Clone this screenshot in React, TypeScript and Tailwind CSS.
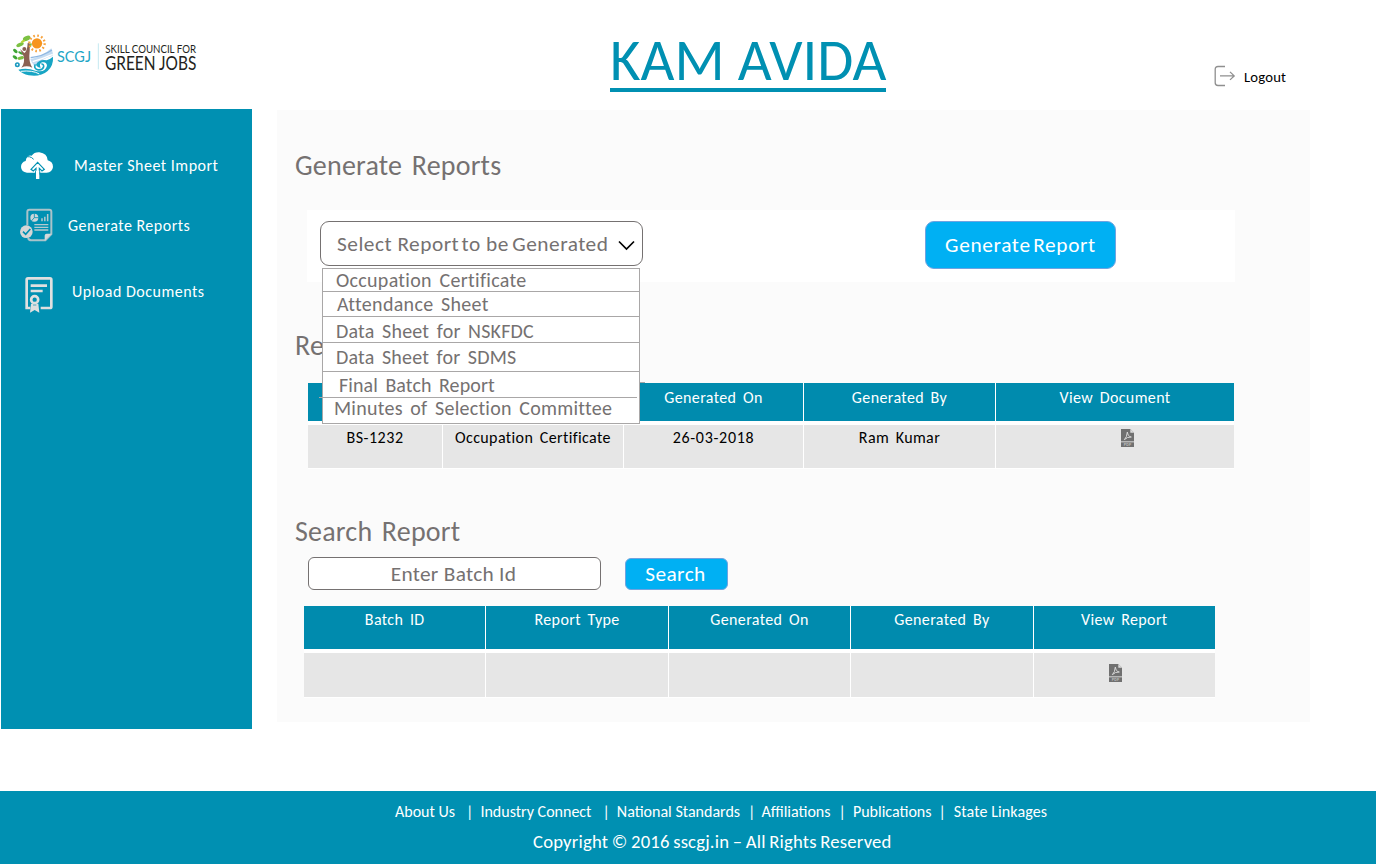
import type { ReactNode } from "react";

function Logo() {
  return (
    <svg width="190" height="48" viewBox="30 18 570 144" className="shrink-0 overflow-visible">
      {/* leaves */}
      <g fill="#7cc142">
        <ellipse cx="80" cy="40" rx="12" ry="7" transform="rotate(-25 80 40)" />
        <ellipse cx="60" cy="59" rx="12" ry="5.500" transform="rotate(-25 60 59)" />
        <ellipse cx="62" cy="99" rx="10" ry="5" transform="rotate(-15 62 99)" />
        <ellipse cx="90" cy="62" rx="8" ry="4" transform="rotate(-60 90 62)" />
      </g>
      <g fill="#3fa535">
        <ellipse cx="46" cy="78" rx="8" ry="4.500" transform="rotate(40 46 78)" />
        <ellipse cx="62" cy="84" rx="8" ry="3.500" transform="rotate(25 62 84)" />
        <ellipse cx="45" cy="97" rx="8" ry="4.500" transform="rotate(35 45 97)" />
      </g>
      <ellipse cx="69" cy="49" rx="7" ry="3.500" fill="#b5d334" transform="rotate(-30 69 49)" />
      {/* tree */}
      <path d="M64 128 Q76 114 71 94 L60 72 L73 84 Q82 78 83 54 L89 55 Q90 76 88 92 Q87 112 97 128 Q80 120 64 128 Z" fill="#8b6152" />
      <circle cx="73" cy="72" r="6" fill="#8b6152" />
      {/* sun */}
      <circle cx="111" cy="55" r="23" fill="none" stroke="#f7a23c" strokeWidth="7" strokeDasharray="5 7.040" />
      <circle cx="111" cy="55" r="15.500" fill="#f7941d" />
      {/* water */}
      <path d="M91 102 Q122 98 154 70 Q160 84 158 93 Q130 98 103 124 Q94 112 91 102Z" fill="#c5dcf2" />
      <path d="M92 98 Q128 94 156 75" stroke="#8fb8e2" strokeWidth="4" fill="none" />
      <path d="M98 110 Q128 101 158 88" stroke="#fff" strokeWidth="4" fill="none" />
      <path d="M159 95 Q161 121 143 138 Q121 157 86 151 Q67 147 55 134 Q82 128 106 137 Q135 145 141 122 Q140 109 126 112 Q116 117 122 128 Q111 127 108 119 Q117 102 140 106 Q150 103 159 95Z" fill="#17a5c4" />
      <path d="M62 139 Q98 135 118 147" stroke="#fff" strokeWidth="3" fill="none" />
      <path d="M106 118 Q100 129 112 134 Q127 137 131 125 Q131 116 124 117" fill="none" stroke="#17a5c4" strokeWidth="5" />
      <circle cx="52" cy="119" r="5" fill="none" stroke="#1d9ac0" strokeWidth="5" />
      <text x="171" y="111" fontFamily="Lato" fontSize="48" fill="#1ea6c6" textLength="102" lengthAdjust="spacingAndGlyphs">SCGJ</text>
      <path d="M295 55v78" stroke="#c4e9f1" strokeWidth="3" />
      <text x="316" y="84" fontFamily="Lato" fontSize="35" fill="#231f20" textLength="272" lengthAdjust="spacingAndGlyphs">SKILL COUNCIL FOR</text>
      <text x="315" y="135" fontFamily="Lato" fontSize="55" fill="#231f20" textLength="274" lengthAdjust="spacingAndGlyphs">GREEN JOBS</text>
    </svg>
  );
}

function LogoutIcon() {
  return (
    <svg width="22" height="22" viewBox="0 0 22 22" fill="none" stroke="#8f8f8f" strokeWidth="1.3" className="shrink-0">
      <path d="M11 1.500H4Q1.200 1.500 1.200 4.300v13.400Q1.200 20.500 4 20.500H11" />
      <path d="M6 10.900h14M16 6.900l4.200 4-4.200 4" />
    </svg>
  );
}

function CloudIcon() {
  return (
    <svg width="32" height="28" viewBox="0 0 96 84" className="shrink-0">
      <path d="M18 62Q1 60 0 45Q0 31 14 27Q17 9 32 11Q40 0 55 1Q79 4 80 25Q96 29 96 45Q94 61 77 62Z" fill="#fff" />
      <path d="M11 17Q26 9 38 22" fill="none" stroke="#0090b2" strokeWidth="3" />
      <path d="M50 31L70 52L63 57L55 49V63H45V49L37 57L30 52Z" fill="#fff" stroke="#0090b2" strokeWidth="3.500" />
      <path d="M45 56h10v25H45z" fill="#fff" />
      <path d="M43.500 58v10M56.500 58v10" stroke="#0090b2" strokeWidth="2.500" />
    </svg>
  );
}

function ReportIcon() {
  return (
    <svg width="33" height="34" viewBox="0 0 99 102" className="shrink-0">
      <path d="M22 52V11Q22 5 28 5H88Q94 5 94 11V78L76 97H34Q27 97 24 90" fill="none" stroke="#a9c3ca" strokeWidth="6" />
      <path d="M94 77H80Q74 77 74 83V98Z" fill="#d4d9db" />
      <circle cx="43" cy="29" r="12" fill="#ccd6d9" />
      <path d="M43 29V16M43 29H56M43 29L34 39" stroke="#0090b2" strokeWidth="2.500" />
      <path d="M66 40V31M74.500 40V26M83 40V18" stroke="#b5c9cf" strokeWidth="4.500" />
      <path d="M43 50H85M43 58H85M43 66H85" stroke="#b5c9cf" strokeWidth="4" />
      <circle cx="19" cy="71" r="19" fill="#d6d6d6" />
      <path d="M9 71L17 79L31 63" fill="none" stroke="#0090b2" strokeWidth="5" />
    </svg>
  );
}

function CertificateIcon() {
  return (
    <svg width="28" height="36" viewBox="0 0 84 108" fill="none" stroke="#e0e0e0" className="shrink-0">
      <path d="M16 93H5V8Q5 4 9 4H75Q79 4 79 8V89Q79 93 75 93H47" strokeWidth="8" />
      <path d="M17 26H66M17 42H53" strokeWidth="8" />
      <circle cx="29" cy="68" r="10.500" strokeWidth="8" />
      <path d="M18 80H40L43 107L29 99L15 107Z" fill="#e0e0e0" stroke="none" />
      <path d="M24 84h10" stroke="#0090b2" strokeWidth="2" />
    </svg>
  );
}

function PdfIcon() {
  return (
    <svg width="13" height="18" viewBox="0 0 39 54" className="shrink-0">
      <path d="M0 0H28L39 11V54H0Z" fill="#707070" />
      <path d="M28 0V11H39Z" fill="#dcdcdc" />
      <path d="M0 38.500H39" stroke="#d8d8d8" strokeWidth="3" />
      <path d="M10 32Q18 25 19 9Q21 23 31 24Q19 23 10 32Z" fill="none" stroke="#d8d8d8" strokeWidth="3" />
      <text x="8" y="51" fontFamily="Liberation Sans" fontSize="12" fontWeight="700" fill="#bdbdbd" textLength="23" lengthAdjust="spacingAndGlyphs">PDF</text>
    </svg>
  );
}

function Th({ children }: { children?: ReactNode }) {
  return <div className="bg-[#008bae] text-white">{children}</div>;
}

function Td({ children, className = "" }: { children?: ReactNode; className?: string }) {
  return <div className={`bg-[#e6e6e6] text-black ${className}`}>{children}</div>;
}

const heading = "h-[34px] text-[28px] leading-[32px] tracking-[0.2px] [word-spacing:3px] text-[#757171]";

const options = [
  { label: "Occupation Certificate", box: "h-[23px] pt-px pl-[13px] border-b tracking-[0.3px]" },
  { label: "Attendance Sheet", box: "h-[25px] pt-[2px] pl-[14px] border-b tracking-[0.3px]" },
  { label: "Data Sheet for NSKFDC", box: "h-[26px] pt-[4px] pl-[13px] border-b tracking-[0.2px]" },
  { label: "Data Sheet for SDMS", box: "h-[29px] pt-[4px] pl-[13px] border-b tracking-[0.18px]" },
  { label: "Final Batch Report", box: "h-[26px] pt-[3px] pl-[16px] tracking-[0.1px]" },
  { label: "Minutes of Selection Committee", box: "h-[25px] pl-[11px] tracking-[0.25px]" },
];

export default function App() {
  return (
    <div className="flex h-[864px] w-[1376px] flex-col overflow-hidden bg-white font-[Carlito,Calibri,Lato,sans-serif]">
      <header className="flex h-[109px] shrink-0 items-start">
        <div className="w-[610px] pt-[31px] pl-[10px]">
          <Logo />
        </div>
        <h1 className="mt-[36px] h-[56px] w-[276px] shrink-0 border-b-4 border-[#0090b2] text-[58.670px] leading-[48px] whitespace-nowrap text-[#0090b2]">
          KAM AVIDA
        </h1>
        <button className="mt-[65px] ml-[328px] flex items-start text-black">
          <LogoutIcon />
          <span className="mt-[2px] ml-[8px] text-[14.670px] leading-[20px] tracking-[0.2px]">Logout</span>
        </button>
      </header>

      <main className="flex h-[682px] shrink-0">
        <nav className="ml-px flex h-[620px] w-[251px] shrink-0 flex-col bg-[#0090b2] text-[16px] leading-[20px] tracking-[0.5px] text-white">
          <a className="mt-[43px] flex h-[56px] items-start pl-[20px]">
            <CloudIcon />
            <span className="mt-[4px] ml-[21px]">Master Sheet Import</span>
          </a>
          <a className="flex h-[69px] items-start pl-[19px]">
            <ReportIcon />
            <span className="mt-[8px] ml-[15px]">Generate Reports</span>
          </a>
          <a className="flex items-start pl-[24px]">
            <CertificateIcon />
            <span className="mt-[5px] ml-[19px]">Upload Documents</span>
          </a>
        </nav>

        <section className="mt-px ml-[25px] flex h-[612px] w-[1033px] shrink-0 flex-col bg-[#fbfbfb] pt-[40px] pl-[18px]">
          <h2 className={heading}>Generate Reports</h2>

          <div className="relative mt-[26px] ml-[12px] flex h-[72px] w-[928px] items-start justify-between bg-white pt-[11px] pr-[119px] pl-[13px]">
            <div className="flex h-[45px] w-[323px] items-center justify-between rounded-[9px] border border-[#757171] bg-white pr-[7px] pl-[16px]">
              <span className="pt-px text-[21.330px] leading-[26px] tracking-[0.5px] whitespace-nowrap text-[#757171]">
                Select Report<span className="-ml-[3px]"> to be</span>
                <span className="-ml-[2px]"> Generated</span>
              </span>
              <svg width="17" height="11" viewBox="0 0 17 11" fill="none" stroke="#000" strokeWidth="1.700" className="mt-[3px] shrink-0">
                <path d="M1 1.500L8.500 9L16 1.500" />
              </svg>
            </div>
            <button className="h-[48px] w-[191px] rounded-[9px] border border-[#6fa3e0] bg-[#00b0f3] text-[21.330px] leading-[26px] tracking-[0.650px] [word-spacing:-3px] text-white">
              Generate Report
            </button>

            <div className="absolute top-[58px] left-[15px] z-10 w-[318px] border border-[#a9a7a7] bg-white text-[20px] leading-[20px] whitespace-nowrap text-[#757171] [word-spacing:2.8px]">
              {options.map((o) => (
                <div key={o.label} className={`border-[#a9a7a7] ${o.box}`}>
                  {o.label}
                </div>
              ))}
              <div className="absolute top-[128px] -left-[4px] h-px w-[318px] bg-[#a9a7a7]" />
              <div className="absolute top-[113px] left-[317px] h-px w-[5px] bg-[#a9a7a7]" />
            </div>
          </div>

          <h2 className={`mt-[48px] ${heading}`}>Re</h2>

          <div className="mt-[19px] ml-[13px] grid w-[926px] grid-cols-[134px_180px_179px_191px_238px] gap-x-px bg-white text-center text-[16px] leading-[20px] tracking-[0.38px] [word-spacing:2.6px]">
            <div className="col-span-5 grid h-[38px] grid-cols-subgrid leading-[30px]">
              <Th />
              <Th />
              <Th>Generated On</Th>
              <Th>Generated By</Th>
              <Th>View Document</Th>
            </div>
            <div className="col-span-5 mt-[4px] grid h-[44px] grid-cols-subgrid border-b border-white leading-[26px]">
              <Td className="tracking-[0.550px]">BS-1232</Td>
              <Td>Occupation Certificate</Td>
              <Td className="tracking-[0.7px]">26-03-2018</Td>
              <Td>Ram Kumar</Td>
              <Td className="flex justify-center pt-[4px] pl-[25px]">
                <PdfIcon />
              </Td>
            </div>
          </div>

          <h2 className={`mt-[47px] ${heading}`}>Search Report</h2>

          <div className="mt-[7px] ml-[13px] flex items-start gap-[24px]">
            <div className="h-[33px] w-[293px] rounded-[6px] border border-[#757171] bg-white pt-[3px] pr-[2px] text-center text-[21.330px] leading-[26px] tracking-[0.3px] text-[#757171]">
              Enter Batch Id
            </div>
            <button className="mt-px h-[32px] w-[103px] rounded-[6px] border border-[#6fa3e0] bg-[#00b0f3] pr-[2px] text-[21.330px] leading-[26px] tracking-[0.4px] text-white">
              Search
            </button>
          </div>

          <div className="mt-[16px] ml-[9px] grid w-[911px] grid-cols-5 gap-x-px bg-white text-center text-[16px] tracking-[0.38px] [word-spacing:2.6px]">
            <div className="col-span-5 grid h-[43px] grid-cols-subgrid leading-[28px]">
              <Th>Batch ID</Th>
              <Th>Report Type</Th>
              <Th>Generated On</Th>
              <Th>Generated By</Th>
              <Th>View Report</Th>
            </div>
            <div className="col-span-5 mt-[4px] grid h-[45px] grid-cols-subgrid border-b border-white">
              <Td />
              <Td />
              <Td />
              <Td />
              <Td className="flex justify-center pt-[11px] pr-[17px]">
                <PdfIcon />
              </Td>
            </div>
          </div>
        </section>
      </main>

      <footer className="h-[73px] shrink-0 bg-[#0090b2] pt-[11px] text-white">
        <div className="flex pl-[395px] text-[16px] leading-[20px] whitespace-nowrap">
          <a>About Us</a>
          <span className="mr-[7px] ml-[11px]">|</span>
          <a>Industry Connect</a>
          <span className="mr-[7px] ml-[11px]">|</span>
          <a>National Standards</a>
          <span className="mr-[6px] ml-[8px]">|</span>
          <a>Affiliations</a>
          <span className="mr-[7px] ml-[8px]">|</span>
          <a>Publications</a>
          <span className="mr-[8px] ml-[7px]">|</span>
          <a className="tracking-[0.1px]">State Linkages</a>
        </div>
        <p className="mt-[8px] pl-[533px] text-[18.670px] leading-[24px] tracking-[0.2px] [word-spacing:-0.9px]">
          Copyright © 2016 sscgj.in – All Rights Reserved
        </p>
      </footer>
    </div>
  );
}
